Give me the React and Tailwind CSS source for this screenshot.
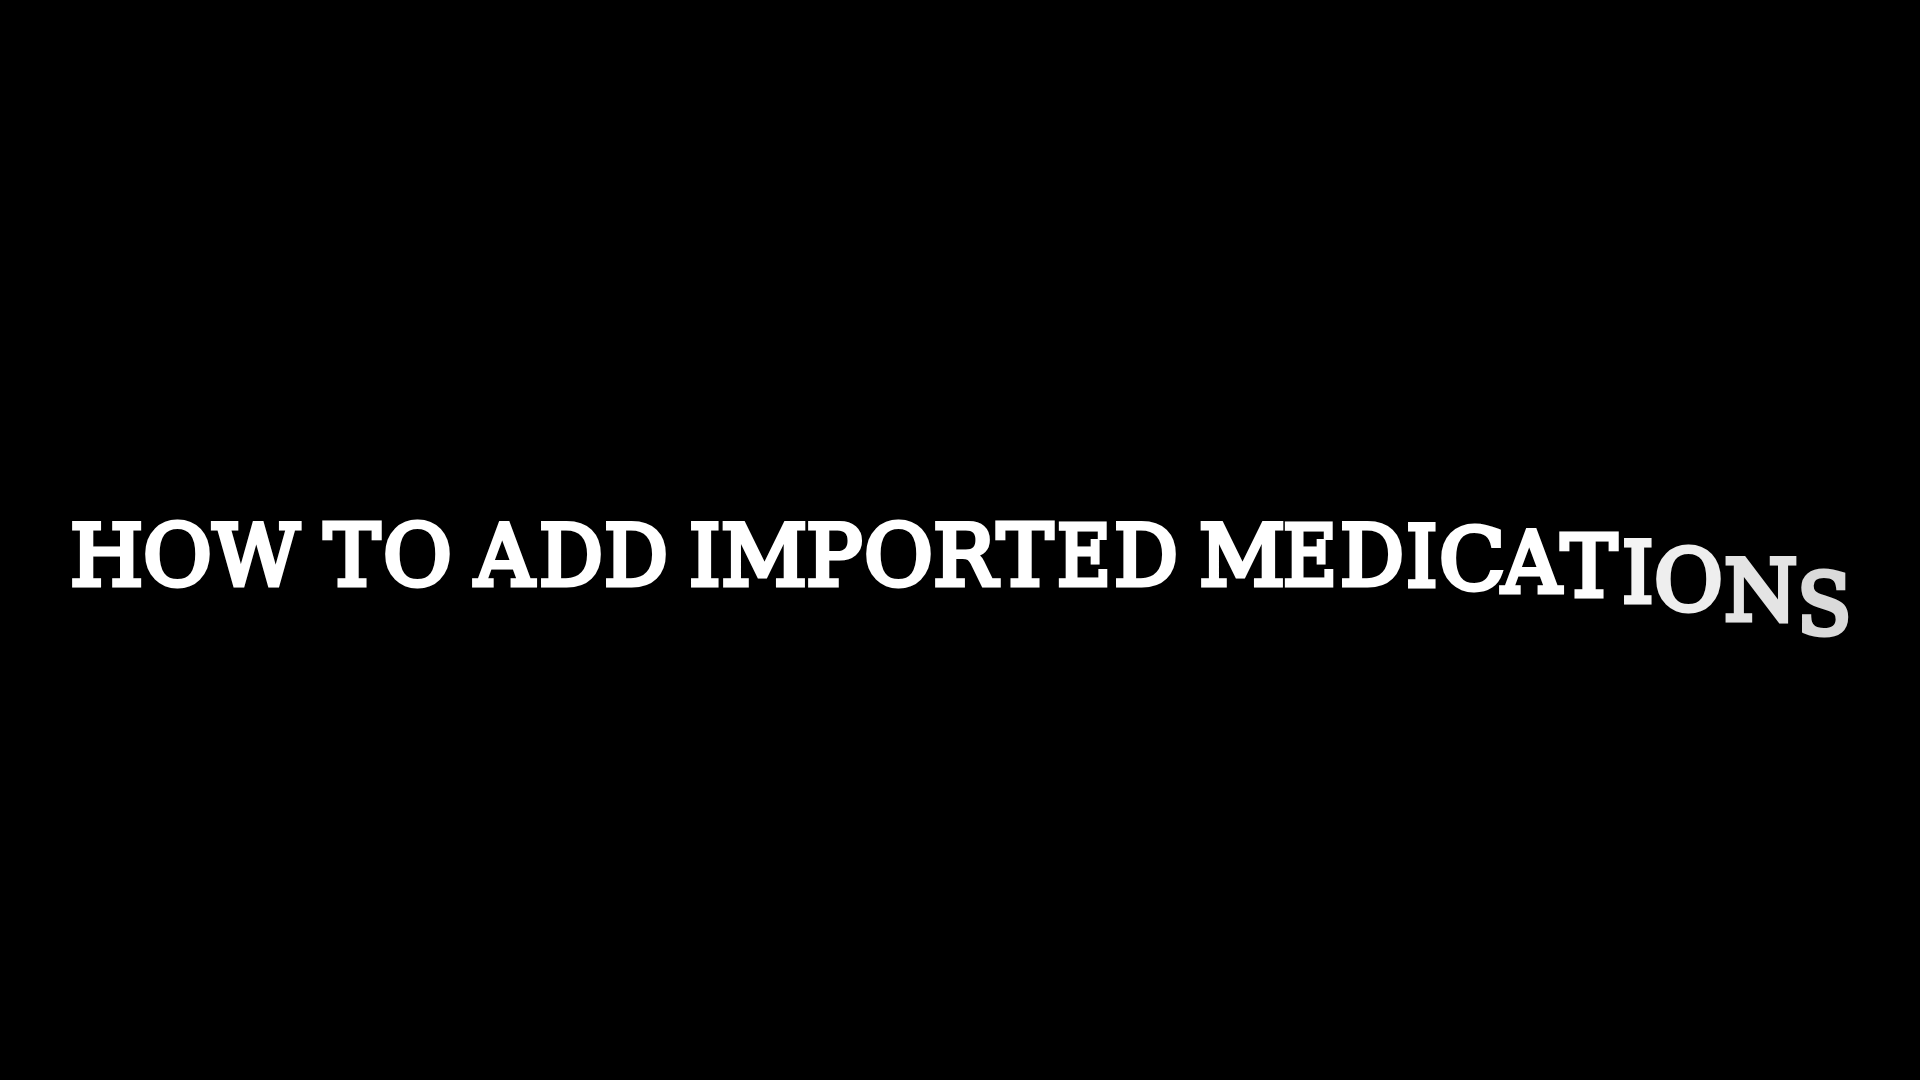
const letters = [
  ["H", "w-[73px]"],
  ["O", "w-[70px]"],
  ["W", "w-[111px]"],
  [" ", "w-0"],
  ["T", "w-[59px]"],
  ["O", "w-[92px]"],
  [" ", "w-0"],
  ["A", "w-[64px] scale-x-[.97]"],
  ["D", "w-[65px] scale-x-[.95]"],
  ["D", "w-[85px] scale-x-[.95]"],
  [" ", "w-0"],
  ["I", "w-[32px] scale-x-[.95]"],
  ["M", "w-[85px]"],
  ["P", "w-[58px]"],
  ["O", "w-[69px]"],
  ["R", "w-[64px]"],
  ["T", "w-[60px]"],
  ["E", "w-[57px] scale-x-[.88]"],
  ["D", "w-[85px] scale-x-[.95]"],
  [" ", "w-0"],
  ["M", "w-[84px]"],
  ["E", "w-[57px] scale-x-[.88]"],
  ["D", "w-[66px] scale-x-[.95]"],
  ["I", "w-[33px] scale-x-[.95] translate-y-[1px]"],
  ["C", "w-[63px] scale-x-[1.03] translate-y-[4px]"],
  ["A", "w-[59px] scale-x-[.97] translate-y-[7px]"],
  ["T", "w-[61px] translate-y-[11px]"],
  ["I", "w-[32px] scale-x-[.95] translate-y-[17px] text-[#f4f4f4]"],
  ["O", "w-[70px] translate-y-[25px] text-[#eeeeee]"],
  ["N", "w-[73px] translate-y-[35px] text-[#e4e4e4]"],
  ["S", "w-[48px] scale-x-[.95] translate-y-[49px] text-[#dadada]"],
];

export default function App() {
  return (
    <div className="flex h-[1080px] w-full items-center overflow-hidden bg-black pt-[32px] pl-[70px]">
      <h1 className="flex whitespace-pre font-['DejaVu_Serif',serif] text-[84px] leading-none font-normal text-white [-webkit-text-stroke:5px_currentColor]">
        {letters.map(([ch, cls], i) => (
          <span key={i} className={`inline-block shrink-0 origin-left ${cls}`}>{ch}</span>
        ))}
      </h1>
    </div>
  );
}
